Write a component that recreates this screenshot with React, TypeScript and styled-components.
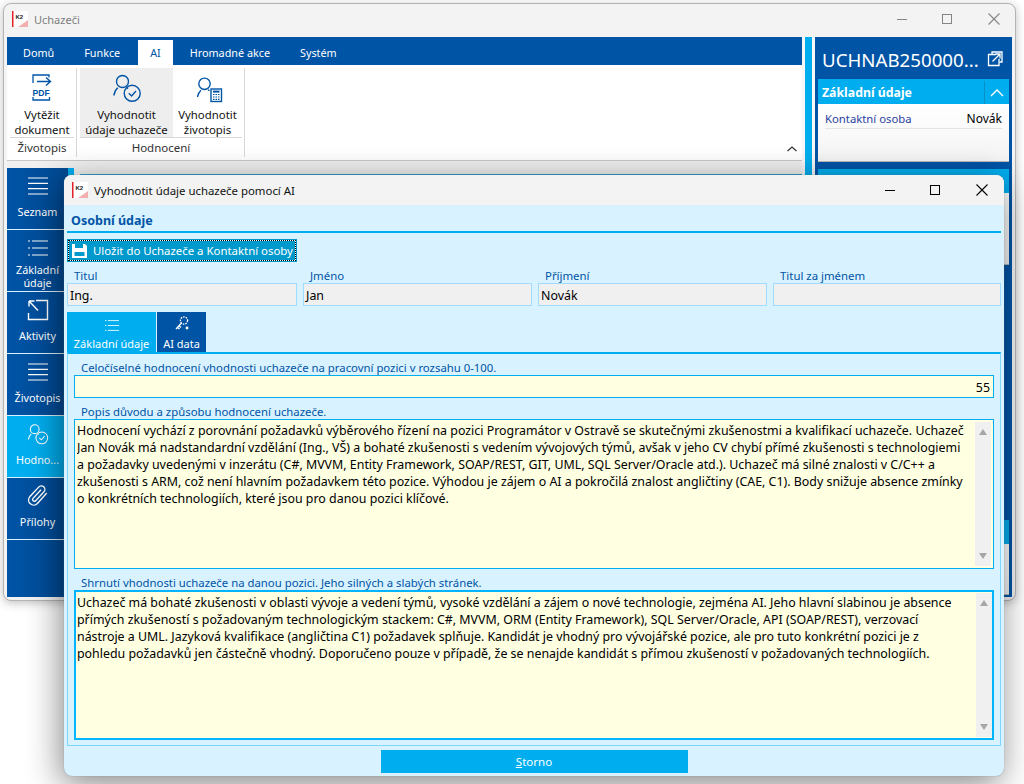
import styled, { createGlobalStyle } from "styled-components";

const GlobalStyle = createGlobalStyle`
  html, body {
    margin: 0;
    padding: 0;
    background: #ffffff;
  }
  * {
    box-sizing: border-box;
  }
  body {
    font-family: "Noto Sans", "Open Sans", sans-serif;
    font-size: 12px;
    color: #000000;
  }
`;

const navItems = [
  { label: "Seznam", icon: "menu" },
  { label: "Základní údaje", icon: "list" },
  { label: "Aktivity", icon: "arrow" },
  { label: "Životopis", icon: "menu" },
  { label: "Hodno...", icon: "user", active: true },
  { label: "Přílohy", icon: "clip" },
];

const popis = `Hodnocení vychází z porovnání požadavků výběrového řízení na pozici Programátor v Ostravě se skutečnými zkušenostmi a kvalifikací uchazeče. Uchazeč
Jan Novák má nadstandardní vzdělání (Ing., VŠ) a bohaté zkušenosti s vedením vývojových týmů, avšak v jeho CV chybí přímé zkušenosti s technologiemi
a požadavky uvedenými v inzerátu (C#, MVVM, Entity Framework, SOAP/REST, GIT, UML, SQL Server/Oracle atd.). Uchazeč má silné znalosti v C/C++ a
zkušenosti s ARM, což není hlavním požadavkem této pozice. Výhodou je zájem o AI a pokročilá znalost angličtiny (CAE, C1). Body snižuje absence zmínky
o konkrétních technologiích, které jsou pro danou pozici klíčové.`;

const shrnuti = `Uchazeč má bohaté zkušenosti v oblasti vývoje a vedení týmů, vysoké vzdělání a zájem o nové technologie, zejména AI. Jeho hlavní slabinou je absence
přímých zkušeností s požadovaným technologickým stackem: C#, MVVM, ORM (Entity Framework), SQL Server/Oracle, API (SOAP/REST), verzovací
nástroje a UML. Jazyková kvalifikace (angličtina C1) požadavek splňuje. Kandidát je vhodný pro vývojářské pozice, ale pro tuto konkrétní pozici je z
pohledu požadavků jen částečně vhodný. Doporučeno pouze v případě, že se nenajde kandidát s přímou zkušeností v požadovaných technologiích.`;

function Logo() {
  return (
    <svg width="16" height="16" viewBox="0 0 16 16">
      <rect width="16" height="16" fill="#ffffff" />
      <rect width="1.5" height="16" fill="#e3202a" />
      <path d="M6 16 L16 9 V16 Z" fill="#f4b0b0" />
      <text x="3.5" y="8" fontSize="6" fontWeight="700" fontFamily="Liberation Sans" fill="#222">K2</text>
    </svg>
  );
}

function NavIcon({ name, size = 30 }: { name: string; size?: number }) {
  const common = { fill: "none", stroke: "#fff", strokeWidth: 1.2 };
  if (name === "menu") {
    return (
      <svg width={size} height={size} viewBox="0 0 30 30" {...common}>
        <path d="M5 7H25M5 12.3H25M5 17.6H25M5 23H25" />
      </svg>
    );
  }
  if (name === "list") {
    return (
      <svg width={size} height={size} viewBox="0 0 30 30" {...common}>
        <path d="M9 8H25M9 15H25M9 22H25M5 8H7M5 15H7M5 22H7" />
      </svg>
    );
  }
  if (name === "arrow") {
    return (
      <svg width={size} height={size} viewBox="0 0 30 30" {...common}>
        <path d="M13 5.5H24.5V24.5H5.5V18" strokeWidth="1.4" />
        <path d="M6 6L15 15.5M6 6H11.5M6 6V11.5" strokeWidth="1.4" />
      </svg>
    );
  }
  if (name === "user") {
    return <UserCheck color="#fff" size={22} />;
  }
  return (
    <svg width={28} height={28} viewBox="0 0 24 24" {...common}>
      <path d="M19.5 9.5 L11.5 18.5 a4.4 4.4 0 0 1 -6.6 -5.8 L12.6 4.4 a3 3 0 0 1 4.5 4 L9.8 16.2 a1.5 1.5 0 0 1 -2.2 -2 L14.6 6.6" />
    </svg>
  );
}

function UserCheck({ color, size = 30 }: { color: string; size?: number }) {
  return (
    <svg width={size} height={size} viewBox="0 0 30 30" fill="none" stroke={color} strokeWidth="1.4">
      <circle cx="10.5" cy="8.5" r="6" />
      <path d="M1.8 22.5 C2.5 19 3.8 16.5 5.8 14.8 M15 14.8 L16 15.6" />
      <circle cx="20.2" cy="20.3" r="8" />
      <path d="M16.8 20.3 L19.6 23 L24 18" />
    </svg>
  );
}

function UserCalc() {
  return (
    <svg width="30" height="30" viewBox="0 0 30 30" fill="none" stroke="#0054a6" strokeWidth="1.4">
      <circle cx="11.5" cy="10.8" r="5.7" />
      <path d="M4.5 24 C5 21 6 19 8 17.3 M15 16.8 L16.5 17.6" />
      <rect x="18" y="16" width="10.5" height="12.5" />
      <path d="M20 18.6 H26.5" strokeWidth="2" />
      <path d="M20 21.5H21.5M22.5 21.5H24M25 21.5H26.5M20 24H21.5M22.5 24H24M25 24H26.5M20 26.4H21.5M22.5 26.4H24M25 26.4H26.5" strokeWidth="1.2" />
    </svg>
  );
}

function PdfIcon() {
  return (
    <svg width="20" height="27" viewBox="0 0 20 27" fill="none">
      <path d="M1 9 V1 H17 V3.5 M1 23 V26 H17.5 V23" stroke="#0054a6" strokeWidth="1.3" />
      <path d="M5 7.5 H18 M14 3.5 L18.5 7.5 L14 11.5" stroke="#0054a6" strokeWidth="1.4" />
      <text x="0.5" y="21.5" fontSize="8.6" fontWeight="700" fontFamily="Liberation Sans" fill="#0054a6">PDF</text>
    </svg>
  );
}

function ExternalIcon() {
  return (
    <svg width="16" height="16" viewBox="0 0 16 16" fill="none" stroke="#fff" strokeWidth="1.3">
      <path d="M9 3.5 H1.5 V14.5 H12 V8" />
      <path d="M5 3 V1 H15 V11 H12.5" />
      <path d="M5.5 10.5 L13 3 M8.5 3 H13 V7.5" />
    </svg>
  );
}

function CloseIcon() {
  return (
    <svg width="12" height="12" viewBox="0 0 12 12" fill="none" stroke="#000" strokeWidth="1.1">
      <path d="M0.5 0.5 L11.5 11.5 M11.5 0.5 L0.5 11.5" />
    </svg>
  );
}

function SaveIcon() {
  return (
    <svg width="15" height="14" viewBox="0 0 15 14">
      <path d="M0 0 H13 L15 2 V14 H0 Z" fill="#ffffff" />
      <rect x="3" y="0" width="8" height="4" fill="#0099cc" />
      <rect x="2.5" y="8" width="10" height="4" fill="#0099cc" />
    </svg>
  );
}

function KeyIcon() {
  return (
    <svg width="16" height="16" viewBox="0 0 16 16" fill="none" stroke="#fff" strokeWidth="1.3">
      <circle cx="10" cy="5.5" r="3.6" strokeDasharray="1.6 1" />
      <path d="M7.5 8 L2 14 M3.5 12.5 L5.5 14 M5 10.8 L7 12.5" />
      <circle cx="13" cy="13" r="0.8" />
    </svg>
  );
}

function Scrollbar({ focused }: { focused?: boolean }) {
  return (
    <ScrollTrack $focused={focused}>
      <ArrowUp />
      <ArrowDown />
    </ScrollTrack>
  );
}

export default function App() {
  return (
    <>
      <GlobalStyle />
      <Desktop>
        <MainWindow>
          <TitleBar>
            <TitleLeft>
              <Logo />
              <MainTitle>Uchazeči</MainTitle>
            </TitleLeft>
            <WinButtons $dim>
              <WinMin />
              <WinMax />
              <CloseIcon />
            </WinButtons>
          </TitleBar>
          <MainBody>
            <LeftColumn>
              <RibbonTabs>
                <RibbonTab>Domů</RibbonTab>
                <RibbonTab>Funkce</RibbonTab>
                <RibbonTab $active>AI</RibbonTab>
                <RibbonTab>Hromadné akce</RibbonTab>
                <RibbonTab>Systém</RibbonTab>
              </RibbonTabs>
              <Ribbon>
                <RibbonGroup>
                  <GroupButtons>
                    <RibbonButton $w={64}>
                      <RibbonIcon><PdfIcon /></RibbonIcon>
                      <RibbonLabel>Vytěžit<br />dokument</RibbonLabel>
                    </RibbonButton>
                  </GroupButtons>
                  <GroupTitle>Životopis</GroupTitle>
                </RibbonGroup>
                <RibbonGroup>
                  <GroupButtons>
                    <RibbonButton $w={93} $hover>
                      <RibbonIcon><UserCheck color="#0054a6" /></RibbonIcon>
                      <RibbonLabel>Vyhodnotit<br />údaje uchazeče</RibbonLabel>
                    </RibbonButton>
                    <RibbonButton $w={69}>
                      <RibbonIcon><UserCalc /></RibbonIcon>
                      <RibbonLabel>Vyhodnotit<br />životopis</RibbonLabel>
                    </RibbonButton>
                  </GroupButtons>
                  <GroupTitle>Hodnocení</GroupTitle>
                </RibbonGroup>
                <CollapseRibbon>
                  <svg width="12" height="8" viewBox="0 0 12 8" fill="none" stroke="#333" strokeWidth="1.2">
                    <path d="M1.5 6 L6 2 L10.5 6" />
                  </svg>
                </CollapseRibbon>
              </Ribbon>
              <WorkArea>
                <SideNav>
                  {navItems.map((item) => (
                    <NavItem key={item.label} $active={item.active}>
                      <NavGlyph>
                        <NavIcon name={item.icon} />
                      </NavGlyph>
                      <NavLabel>{item.label}</NavLabel>
                    </NavItem>
                  ))}
                </SideNav>
                <Content>
                  <ContentHead>
                    <ContentTab />
                    <ContentLine />
                  </ContentHead>
                </Content>
              </WorkArea>
            </LeftColumn>
            <Splitter />
            <RightPanel>
              <RecordHead>
                <RecordTitle>UCHNAB250000...</RecordTitle>
                <ExternalIcon />
              </RecordHead>
              <InfoHeader>
                <span>Základní údaje</span>
                <InfoToggle>
                  <svg width="14" height="8" viewBox="0 0 14 8" fill="none" stroke="#fff" strokeWidth="1.3">
                    <path d="M1 7 L7 1 L13 7" />
                  </svg>
                </InfoToggle>
              </InfoHeader>
              <InfoBody $h={58}>
                <InfoRow>
                  <InfoKey>Kontaktní osoba</InfoKey>
                  <span>Novák</span>
                </InfoRow>
              </InfoBody>
              <CardHeader $top={7} />
              <InfoBody $h={72} />
              <CardHeader $top={255} />
              <InfoBody $h={51} />
            </RightPanel>
          </MainBody>
        </MainWindow>

        <Dialog>
          <DialogTitleBar>
            <TitleLeft>
              <Logo />
              <DialogTitle>Vyhodnotit údaje uchazeče pomocí AI</DialogTitle>
            </TitleLeft>
            <WinButtons>
              <WinMin />
              <WinMax />
              <CloseIcon />
            </WinButtons>
          </DialogTitleBar>
          <DialogBody>
            <SectionTitle>Osobní údaje</SectionTitle>
            <SaveButton>
              <SaveIcon />
              Uložit do Uchazeče a Kontaktní osoby
            </SaveButton>
            <FieldGrid>
              <Field><FieldLabel>Titul</FieldLabel><FieldValue>Ing.</FieldValue></Field>
              <Field><FieldLabel>Jméno</FieldLabel><FieldValue>Jan</FieldValue></Field>
              <Field><FieldLabel>Příjmení</FieldLabel><FieldValue>Novák</FieldValue></Field>
              <Field><FieldLabel>Titul za jménem</FieldLabel><FieldValue /></Field>
            </FieldGrid>
            <Tabs>
              <Tab $active $w={89}>
                <NavIcon name="list" size={22} />
                <span>Základní údaje</span>
              </Tab>
              <Tab $w={49}>
                <KeyIcon />
                <span>AI data</span>
              </Tab>
            </Tabs>
            <TabPanel>
              <AreaLabel>Celočíselné hodnocení vhodnosti uchazeče na pracovní pozici v rozsahu 0-100.</AreaLabel>
              <ScoreInput>55</ScoreInput>
              <AreaLabel>Popis důvodu a způsobu hodnocení uchazeče.</AreaLabel>
              <TextBox>
                <TextContent>{popis}</TextContent>
                <Scrollbar />
              </TextBox>
              <AreaLabel>Shrnutí vhodnosti uchazeče na danou pozici. Jeho silných a slabých stránek.</AreaLabel>
              <TextBox $focused>
                <TextContent>{shrnuti}</TextContent>
                <Scrollbar focused />
              </TextBox>
            </TabPanel>
            <Footer>
              <StornoButton><u>S</u>torno</StornoButton>
            </Footer>
          </DialogBody>
        </Dialog>
      </Desktop>
    </>
  );
}

const Desktop = styled.div`
  position: relative;
  width: 1024px;
  height: 784px;
  overflow: hidden;
  background: #ffffff;
`;
const MainWindow = styled.div`
  position: absolute;
  left: 3px;
  top: 3px;
  width: 1013px;
  height: 598px;
  display: flex;
  flex-direction: column;
  background: #f3f3f3;
  border: 1px solid #b4b4b4;
  border-radius: 8px;
  padding: 0 3px 3px;
  box-shadow: 0 2px 10px rgba(0, 0, 0, 0.25);
`;
const TitleBar = styled.div`
  height: 33px;
  display: flex;
  align-items: center;
  justify-content: space-between;
  flex-shrink: 0;
  padding-bottom: 3px;
`;
const TitleLeft = styled.div`
  display: flex;
  align-items: center;
  gap: 6px;
  padding-left: 5px;
`;
const MainTitle = styled.span`
  color: #7d7d7d;
  font-size: 11px;
`;
const WinButtons = styled.div<{ $dim?: boolean }>`
  display: flex;
  align-items: center;
  gap: 35px;
  padding-right: 12px;
  opacity: ${(p) => (p.$dim ? 0.45 : 1)};
  & > svg {
    margin-left: 1px;
  }
`;
const WinMin = styled.div`
  width: 10px;
  height: 1px;
  background: #000;
`;
const WinMax = styled.div`
  width: 10px;
  height: 10px;
  border: 1px solid #000;
`;
const MainBody = styled.div`
  flex: 1;
  min-height: 0;
  display: flex;
  background: #f7f7f7;
`;
const LeftColumn = styled.div`
  width: 795px;
  display: flex;
  flex-direction: column;
  background: #f0f0f0;
`;
const RibbonTabs = styled.div`
  height: 28px;
  flex-shrink: 0;
  display: flex;
  align-items: flex-end;
  background: #0054a6;
  padding-left: 4px;
`;
const RibbonTab = styled.div<{ $active?: boolean }>`
  height: 25px;
  padding: 0 12px;
  margin-right: ${(p) => (p.$active ? "5px" : "6px")};
  display: flex;
  align-items: center;
  font-size: 10.8px;
  color: ${(p) => (p.$active ? "#0054a6" : "#ffffff")};
  background: ${(p) => (p.$active ? "#ffffff" : "transparent")};
`;
const Ribbon = styled.div`
  position: relative;
  height: 96px;
  flex-shrink: 0;
  display: flex;
  padding-top: 3px;
  background: #ffffff;
  border-bottom: 1px solid #c8c8c8;
`;
const RibbonGroup = styled.div`
  height: 89px;
  display: flex;
  flex-direction: column;
  padding: 0 2px 0 3px;
  border-right: 1px solid #d8d8d8;
`;
const GroupButtons = styled.div`
  height: 70px;
  display: flex;
  border-bottom: 1px solid #d8d8d8;
`;
const RibbonButton = styled.div<{ $w: number; $hover?: boolean }>`
  width: ${(p) => p.$w}px;
  display: flex;
  flex-direction: column;
  align-items: center;
  background: ${(p) => (p.$hover ? "#eeeeee" : "transparent")};
`;
const RibbonIcon = styled.div`
  height: 39px;
  display: flex;
  align-items: center;
  justify-content: center;
`;
const RibbonLabel = styled.div`
  font-size: 11.4px;
  line-height: 15px;
  text-align: center;
  white-space: nowrap;
  color: #111;
`;
const GroupTitle = styled.div`
  height: 19px;
  line-height: 20px;
  font-size: 11.5px;
  text-align: center;
  color: #333;
`;
const CollapseRibbon = styled.div`
  position: absolute;
  right: 4px;
  bottom: 3px;
`;
const WorkArea = styled.div`
  flex: 1;
  min-height: 0;
  display: flex;
  margin-top: 7px;
`;
const SideNav = styled.div`
  width: 61px;
  display: flex;
  flex-direction: column;
  background: linear-gradient(90deg, #0054a6, #004a94);
`;
const NavItem = styled.div<{ $active?: boolean }>`
  height: 62px;
  flex-shrink: 0;
  display: flex;
  flex-direction: column;
  align-items: center;
  padding: 3px 0 8px;
  border-bottom: 1px solid #d9f2ff;
  color: #fff;
  background: ${(p) => (p.$active ? "#00aeef" : "transparent")};
`;
const NavGlyph = styled.div`
  height: 30px;
  flex-shrink: 0;
  display: flex;
  align-items: center;
  justify-content: center;
`;
const NavLabel = styled.div`
  flex: 1;
  display: flex;
  align-items: center;
  font-size: 10.8px;
  line-height: 13px;
  text-align: center;
  padding: 0 2px;
`;
const Content = styled.div`
  flex: 1;
  background: #f0f0f0;
`;
const ContentHead = styled.div`
  height: 8px;
  display: flex;
`;
const ContentTab = styled.div`
  width: 6px;
  background: #00aeef;
`;
const ContentLine = styled.div`
  flex: 1;
  margin-left: 6px;
  border-bottom: 2px solid #2aa0c8;
`;
const Splitter = styled.div`
  width: 7px;
  margin-left: 3px;
  background: #00aeef;
`;
const RightPanel = styled.div`
  flex: 1;
  margin-left: 3px;
  display: flex;
  flex-direction: column;
  padding: 0 3px;
  background: #0054a6;
`;
const RecordHead = styled.div`
  height: 42px;
  flex-shrink: 0;
  display: flex;
  align-items: center;
  justify-content: space-between;
  padding: 2px 6px 0 4px;
  color: #fff;
`;
const RecordTitle = styled.div`
  font-size: 18.7px;
`;
const InfoHeader = styled.div`
  height: 25px;
  flex-shrink: 0;
  display: flex;
  align-items: center;
  justify-content: space-between;
  padding: 2px 0 0 4px;
  background: #00aeef;
  color: #fff;
  font-size: 12.3px;
  font-weight: 700;
`;
const InfoToggle = styled.div`
  width: 25px;
  height: 100%;
  display: flex;
  align-items: center;
  justify-content: center;
  border-left: 1px solid #0a8fc6;
`;
const InfoBody = styled.div<{ $h: number }>`
  height: ${(p) => p.$h}px;
  flex-shrink: 0;
  padding: 4px 7px 0;
  background: linear-gradient(#fff, #f4f4f4);
  border-bottom: 1px solid #bbb;
`;
const InfoRow = styled.div`
  display: flex;
  justify-content: space-between;
  height: 21px;
  align-items: center;
  border-bottom: 1px solid #e4e4e4;
  font-size: 12px;
`;
const InfoKey = styled.span`
  color: #2a3fa0;
  font-size: 11.3px;
`;
const CardHeader = styled.div<{ $top: number }>`
  height: 24px;
  flex-shrink: 0;
  margin-top: ${(p) => p.$top}px;
  background: #00aeef;
`;
const Dialog = styled.div`
  position: absolute;
  left: 64px;
  top: 175px;
  width: 940px;
  height: 601px;
  display: flex;
  flex-direction: column;
  border-radius: 8px;
  overflow: hidden;
  background: #d9f2ff;
  box-shadow: 0 0 1px #777, -3px 8px 34px rgba(0, 0, 0, 0.48);
`;
const DialogTitleBar = styled.div`
  height: 30px;
  flex-shrink: 0;
  display: flex;
  align-items: center;
  justify-content: space-between;
  padding-left: 3px;
  background: #f3f3f3;
  & > div:last-child {
    padding-right: 16px;
  }
`;
const DialogTitle = styled.span`
  font-size: 11.4px;
  color: #111;
`;
const DialogBody = styled.div`
  flex: 1;
  min-height: 0;
  display: flex;
  flex-direction: column;
  padding: 0 3px 2px;
`;
const SectionTitle = styled.div`
  height: 28px;
  margin: 0 0 6px 0;
  padding: 7px 0 0 4px;
  border-bottom: 2px solid #00aeef;
  color: #0054a6;
  font-size: 12.5px;
  font-weight: 700;
`;
const SaveButton = styled.div`
  width: 230px;
  height: 23px;
  flex-shrink: 0;
  display: flex;
  align-items: center;
  gap: 6px;
  padding-left: 5px;
  color: #fff;
  font-size: 11.4px;
  background: #0099cc;
  box-shadow: inset 0 0 0 1px #0099cc, inset 0 0 0 2px #ffffff;
  outline: 1px dotted #000;
  outline-offset: -2px;
  white-space: nowrap;
`;
const FieldGrid = styled.div`
  display: grid;
  grid-template-columns: 230px 229px 229px 228px;
  gap: 6px;
  margin-top: 6px;
`;
const Field = styled.div`
  display: flex;
  flex-direction: column;
`;
const FieldLabel = styled.div`
  height: 15px;
  line-height: 15px;
  padding-left: 7px;
  color: #0054a6;
  font-size: 11.4px;
`;
const FieldValue = styled.div`
  height: 23px;
  line-height: 23px;
  padding-left: 2px;
  font-size: 12.4px;
  background: #f0f0f0;
  border: 1px solid #9fdcff;
`;
const Tabs = styled.div`
  display: flex;
  gap: 1px;
  margin-top: 6px;
  height: 40px;
  flex-shrink: 0;
`;
const Tab = styled.div<{ $active?: boolean; $w: number }>`
  width: ${(p) => p.$w}px;
  height: 40px;
  display: flex;
  flex-direction: column;
  align-items: center;
  justify-content: space-between;
  padding: 3px 0 1px;
  color: #fff;
  font-size: 11px;
  white-space: nowrap;
  background: ${(p) => (p.$active ? "#00aeef" : "#0054a6")};
`;
const TabPanel = styled.div`
  height: 394px;
  flex-shrink: 0;
  padding: 6px 6px 5px 6px;
  border: 1px solid #7fd6fb;
  border-top: 2px solid #00aeef;
`;
const AreaLabel = styled.div`
  height: 15px;
  line-height: 15px;
  padding-left: 7px;
  color: #0054a6;
  font-size: 11.35px;
  & ~ & {
    margin-top: 6px;
  }
`;
const ScoreInput = styled.div`
  height: 23px;
  line-height: 23px;
  padding-right: 3px;
  text-align: right;
  font-size: 12.4px;
  background: #ffffe1;
  border: 1px solid #00aeef;
`;
const TextBox = styled.div<{ $focused?: boolean }>`
  height: 150px;
  display: flex;
  background: #ffffe1;
  border: ${(p) => (p.$focused ? "2px" : "1px")} solid ${(p) => (p.$focused ? "#00b4ff" : "#00aeef")};
  padding-left: ${(p) => (p.$focused ? "1px" : "2px")};
  padding-top: ${(p) => (p.$focused ? "2px" : "2px")};
  padding-bottom: ${(p) => (p.$focused ? "1px" : "2px")};
`;
const TextContent = styled.div`
  flex: 1;
  min-width: 0;
  font-size: 12.4px;
  line-height: 17px;
  white-space: pre;
  overflow: hidden;
`;
const ScrollTrack = styled.div<{ $focused?: boolean }>`
  width: 16px;
  flex-shrink: 0;
  margin: ${(p) => (p.$focused ? "-1px 0 0" : "0 2px 0 0")};
  display: flex;
  flex-direction: column;
  align-items: center;
  justify-content: space-between;
  padding: 7px 0;
  background: #f0f0f0;
`;
const ArrowUp = styled.div`
  width: 0;
  height: 0;
  border-left: 4px solid transparent;
  border-right: 4px solid transparent;
  border-bottom: 6px solid #a6a6a6;
`;
const ArrowDown = styled.div`
  width: 0;
  height: 0;
  border-left: 4px solid transparent;
  border-right: 4px solid transparent;
  border-top: 6px solid #a6a6a6;
`;
const Footer = styled.div`
  display: flex;
  justify-content: center;
  padding-top: 4px;
`;
const StornoButton = styled.div`
  width: 307px;
  height: 23px;
  line-height: 23px;
  text-align: center;
  color: #ffffff;
  font-size: 11.5px;
  background: #00aeef;
`;
